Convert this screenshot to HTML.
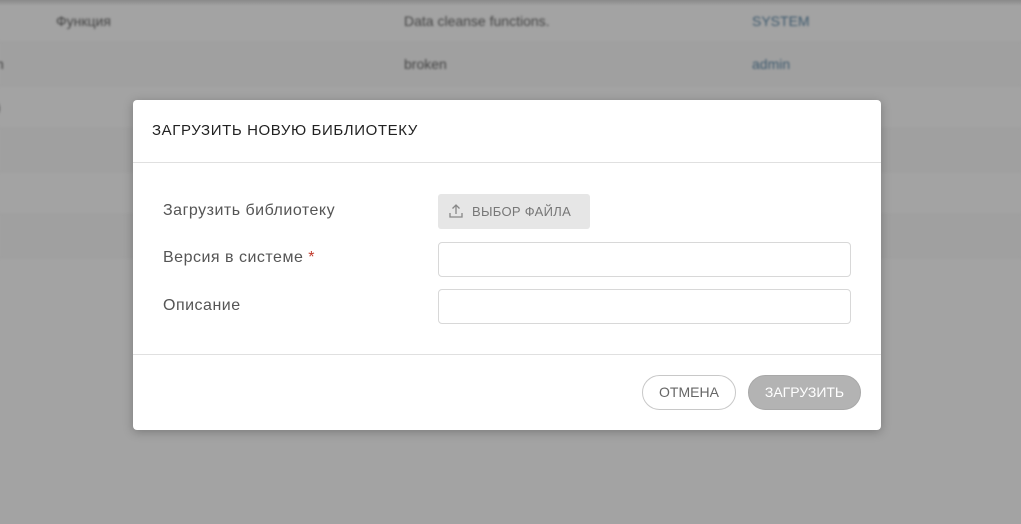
<!DOCTYPE html>
<html><head><meta charset="utf-8"><style>
*{box-sizing:border-box;margin:0;padding:0}
body{width:1021px;height:524px;overflow:hidden;background:#a3a3a3;font-family:"Liberation Sans","DejaVu Sans",sans-serif;position:relative}
.bg{position:absolute;left:0;top:0;width:1021px;filter:blur(1px)}
.row{height:43px;border-bottom:1px solid #9c9c9c;position:relative;font-size:14px;color:#444}
.row.alt{background:#a0a0a0}
.row span{position:absolute;top:13px}
.top{position:absolute;left:0;top:0;width:1021px;height:6px;background:linear-gradient(#8a8a8a,rgba(163,163,163,0))}
.modal{position:absolute;left:133px;top:100px;width:748px;height:330px;background:#fff;border-radius:4px;box-shadow:0 2px 10px rgba(0,0,0,.25)}
.hd{height:63px;border-bottom:1px solid #e0e0e0;padding:22px 0 0 19px;font-size:15px;letter-spacing:.6px;color:#222}
.lbl{position:absolute;left:30px;font-size:16px;letter-spacing:.5px;color:#555}
.file{position:absolute;left:305px;top:94px;width:152px;height:35px;background:#e6e6e6;border-radius:3px;font-size:13px;letter-spacing:.3px;color:#777;padding:10px 0 0 34px}
.file svg{position:absolute;left:10px;top:9px}
.inp{position:absolute;left:305px;width:413px;height:35px;border:1px solid #d8d8d8;border-radius:4px}
.ft{position:absolute;left:0;top:254px;width:748px;border-top:1px solid #e0e0e0}
.btn{position:absolute;top:275px;height:35px;border-radius:18px;font-size:14px;text-align:center;line-height:33px}
</style></head><body>
<div class="bg">
<div class="row"><span style="left:56px">Функция</span><span style="left:404px">Data cleanse functions.</span><span style="left:752px;color:#3e5a6e">SYSTEM</span></div>
<div class="row alt"><span style="left:-4px">n</span><span style="left:404px">broken</span><span style="left:752px;color:#3e5a6e">admin</span></div>
<div class="row"><span style="left:-4px">)</span></div>
<div class="row alt"></div>
<div class="row"></div>
<div class="row alt"></div>
</div>
<div class="top"></div>
<div class="modal">
<div class="hd">ЗАГРУЗИТЬ НОВУЮ БИБЛИОТЕКУ</div>
<div class="lbl" style="top:102px">Загрузить библиотеку</div>
<div class="file"><svg width="16" height="16" viewBox="0 0 16 16" fill="none" stroke="#888" stroke-width="1.3"><path d="M8 11V2M4.5 5.5L8 2l3.5 3.5M2 10v4h12v-4"/></svg>ВЫБОР ФАЙЛА</div>
<div class="lbl" style="top:149px">Версия в системе <span style="color:#c0392b">*</span></div>
<div class="inp" style="top:142px"></div>
<div class="lbl" style="top:197px">Описание</div>
<div class="inp" style="top:189px"></div>
<div class="ft"></div>
<div class="btn" style="left:509px;width:94px;border:1px solid #c8c8c8;color:#666">ОТМЕНА</div>
<div class="btn" style="left:615px;width:113px;background:#b3b3b3;color:#fff;border:1px solid #a8a8a8">ЗАГРУЗИТЬ</div>
</div>
</body></html>
